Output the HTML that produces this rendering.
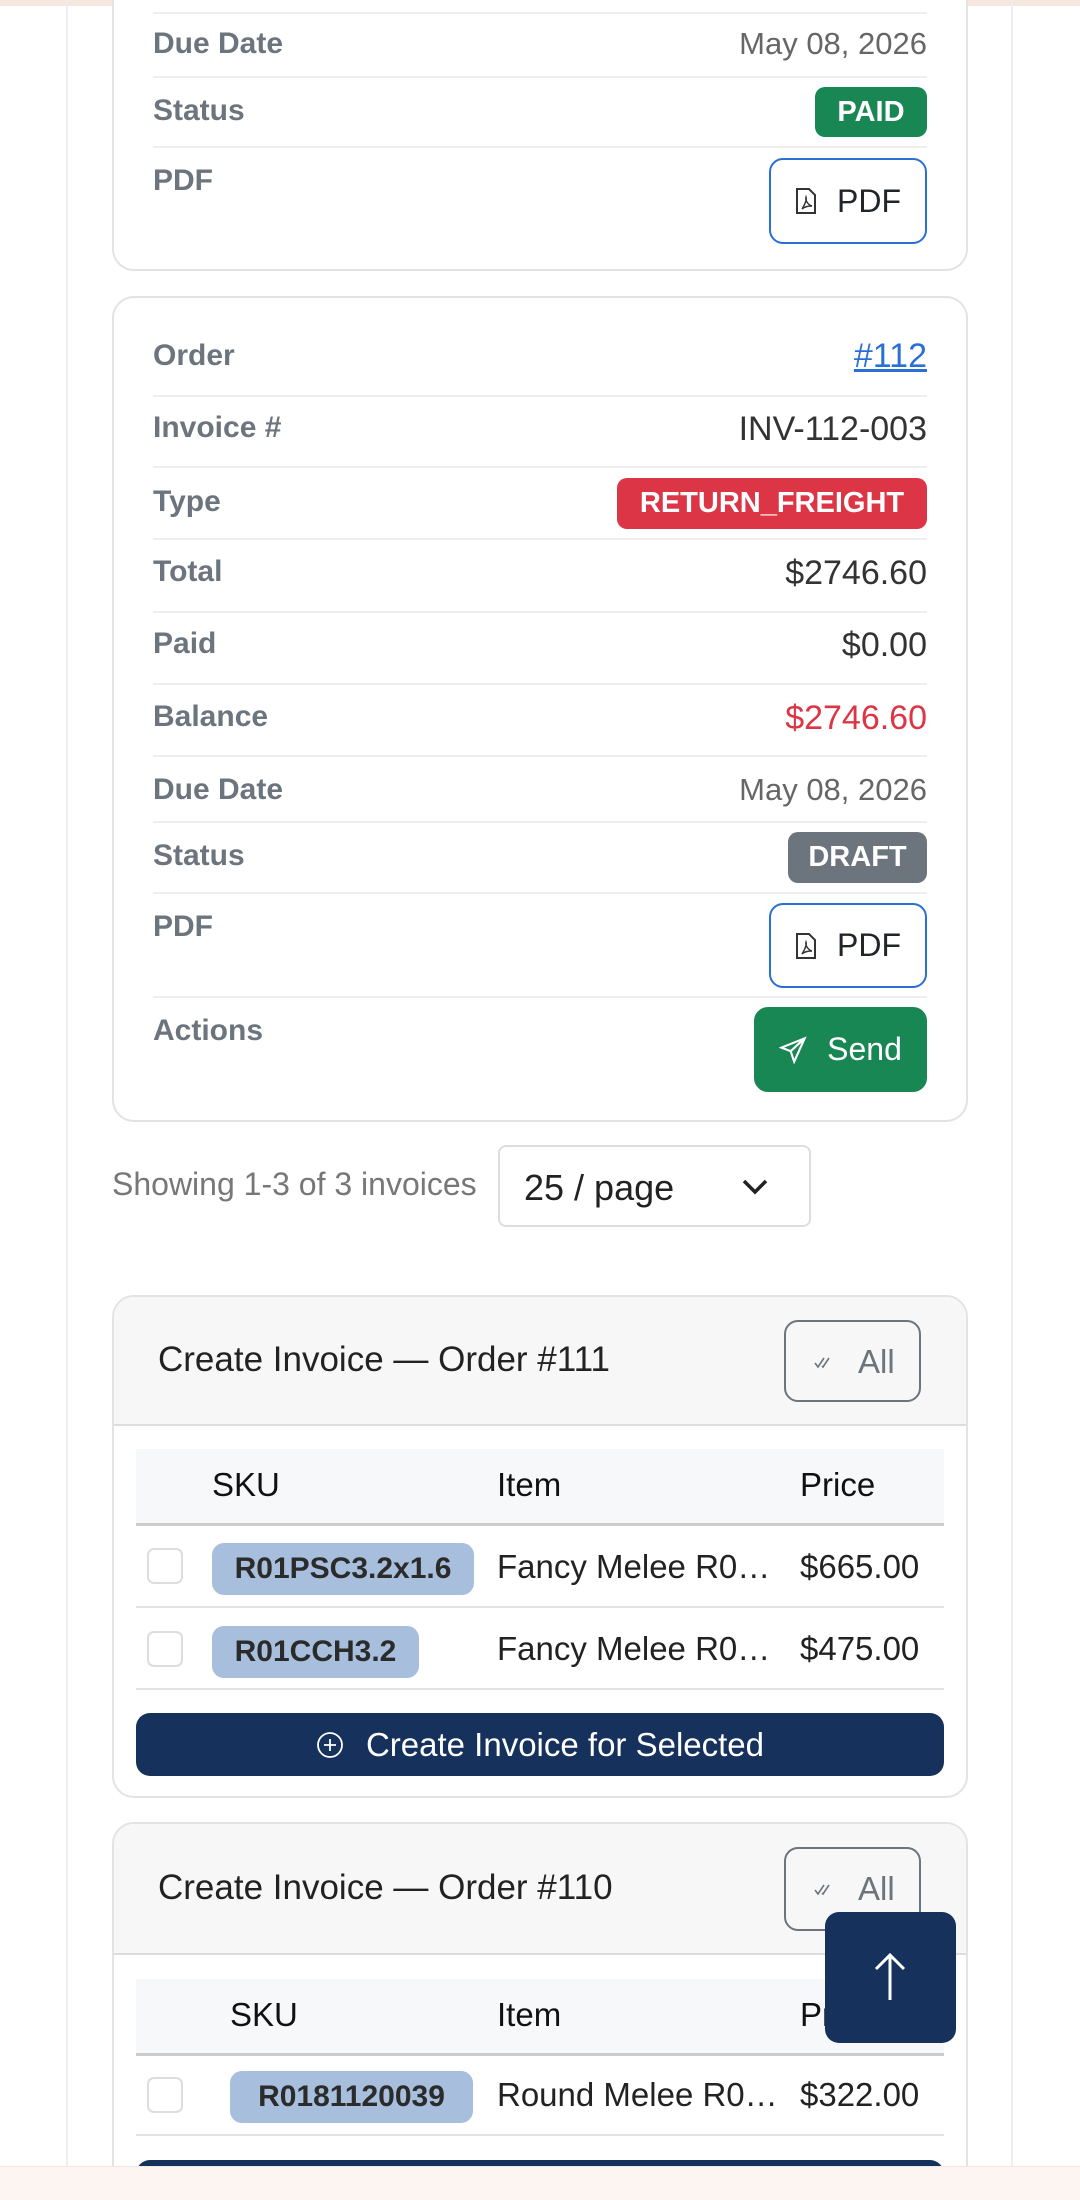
<!DOCTYPE html>
<html style="width:1080px;height:2200px;overflow:hidden"><head><meta charset="utf-8"><style>
*{box-sizing:border-box;margin:0;padding:0}
body{width:1080px;height:2200px;background:#fff;position:relative;overflow:hidden;font-family:"Liberation Sans",sans-serif;color:#212529}
.a{position:absolute}
.vl{position:absolute;top:0;bottom:0;width:2px;background:#eee}
.card{position:absolute;left:112px;width:856px;border:2px solid #e3e3e3;border-radius:22px;background:#fff;overflow:hidden}
.lab{position:absolute;left:153px;font-weight:bold;color:#6c757d;font-size:30px}
.val{position:absolute;right:153px;font-size:34px;color:#333;text-align:right}
.hl{position:absolute;left:153px;width:774px;height:2px;background:#eeeeee}
.badge{position:absolute;right:153px;color:#fff;font-weight:bold;font-size:29px;border-radius:10px;text-align:center}
.btn{position:absolute;right:153px;border:2px solid #2a6fd6;border-radius:14px;font-size:32px;color:#212529;display:flex;align-items:center;justify-content:center;gap:20px}
.th{position:absolute;font-size:33px;color:#111}
.sku{position:absolute;background:#a7bedc;border-radius:12px;font-weight:bold;font-size:30px;color:#2b2b2b;display:flex;align-items:center;justify-content:center}
.cb{position:absolute;left:147px;width:36px;height:36px;border:2px solid #ddd;border-radius:7px}
.td{position:absolute;font-size:33px;color:#222;white-space:nowrap}
</style></head><body>
<div class="a" style="left:0;top:0;width:1080px;height:6px;background:#f6e8de"></div>
<div class="vl" style="left:66px"></div><div class="vl" style="left:1011px"></div>

<div class="card" style="top:-30px;height:301px;border-top:none"></div>
<div class="hl" style="top:12px"></div>
<div class="lab" style="top:27px">Due Date</div><div class="val" style="top:26px;font-size:31px;color:#666">May 08, 2026</div>
<div class="hl" style="top:76px"></div>
<div class="lab" style="top:94px">Status</div>
<div class="badge" style="top:87px;width:112px;height:50px;line-height:50px;background:#198754">PAID</div>
<div class="hl" style="top:146px"></div>
<div class="lab" style="top:164px">PDF</div>
<div class="btn" style="top:158px;width:158px;height:86px"><svg width="22" height="28" viewBox="0 0 22 28" fill="none" stroke="#333" stroke-width="2"><path d="M2 2h12l6 6v18H2z"/><path d="M7 22c3-5 5-9 4-12c-1 3 2 8 6 9c-4 0-8 1-10 3z" stroke-width="1.4"/></svg>PDF</div>

<div class="card" style="top:296px;height:826px"></div>
<div class="lab" style="top:339px">Order</div><div class="val" style="top:337px;color:#2a6fd6;text-decoration:underline">#112</div>
<div class="hl" style="top:395px"></div>
<div class="lab" style="top:411px">Invoice #</div><div class="val" style="top:410px">INV-112-003</div>
<div class="hl" style="top:466px"></div>
<div class="lab" style="top:485px">Type</div>
<div class="badge" style="top:478px;width:310px;height:51px;line-height:51px;background:#dc3545">RETURN_FREIGHT</div>
<div class="hl" style="top:538px"></div>
<div class="lab" style="top:555px">Total</div><div class="val" style="top:554px">$2746.60</div>
<div class="hl" style="top:611px"></div>
<div class="lab" style="top:627px">Paid</div><div class="val" style="top:626px">$0.00</div>
<div class="hl" style="top:683px"></div>
<div class="lab" style="top:700px">Balance</div><div class="val" style="top:699px;color:#dc3545">$2746.60</div>
<div class="hl" style="top:755px"></div>
<div class="lab" style="top:773px">Due Date</div><div class="val" style="top:772px;font-size:31px;color:#666">May 08, 2026</div>
<div class="hl" style="top:821px"></div>
<div class="lab" style="top:839px">Status</div>
<div class="badge" style="top:832px;width:139px;height:51px;line-height:51px;background:#6c757d">DRAFT</div>
<div class="hl" style="top:892px"></div>
<div class="lab" style="top:910px">PDF</div>
<div class="btn" style="top:903px;width:158px;height:85px"><svg width="22" height="28" viewBox="0 0 22 28" fill="none" stroke="#333" stroke-width="2"><path d="M2 2h12l6 6v18H2z"/><path d="M7 22c3-5 5-9 4-12c-1 3 2 8 6 9c-4 0-8 1-10 3z" stroke-width="1.4"/></svg>PDF</div>
<div class="hl" style="top:996px"></div>
<div class="lab" style="top:1014px">Actions</div>
<div class="btn" style="top:1007px;width:173px;height:85px;background:#198754;border-color:#198754;color:#fff"><svg width="28" height="28" viewBox="0 0 24 24" fill="none" stroke="#fff" stroke-width="1.8"><path d="M22 2L2 10l8 3 3 9z"/><path d="M22 2L10 13"/></svg>Send</div>

<div class="a" style="left:112px;top:1166px;font-size:32px;color:#777">Showing 1-3 of 3 invoices</div>
<div class="a" style="left:498px;top:1145px;width:313px;height:82px;border:2px solid #ddd;border-radius:8px;font-size:36px;padding:20px 0 0 24px;color:#222">25 / page
<svg class="a" style="left:240px;top:30px" width="30" height="20" viewBox="0 0 30 20" fill="none" stroke="#222" stroke-width="3.5"><path d="M4 4l11 11 11-11"/></svg></div>

<!-- card 3 -->
<div class="card" style="top:1295px;height:503px"></div>
<div class="a" style="left:114px;top:1297px;width:852px;height:129px;background:#f7f7f7;border-bottom:2px solid #ddd;border-radius:20px 20px 0 0"></div>
<div class="a" style="left:158px;top:1340px;font-size:35px;color:#222">Create Invoice — Order #111</div>
<div class="a" style="left:784px;top:1320px;width:137px;height:82px;border:2px solid #6c757d;border-radius:14px;font-size:33px;color:#6c757d;padding:21px 0 0 72px">All<svg class="a" style="left:28px;top:34px" width="20" height="14" viewBox="0 0 20 14" fill="none" stroke="#6c757d" stroke-width="1.6"><path d="M1 7l3 4 6-9M8 10l1 1 6-9"/></svg></div>
<div class="a" style="left:136px;top:1449px;width:808px;height:77px;background:#f7f8fa;border-bottom:3px solid #ccc"></div>
<div class="th" style="left:212px;top:1466px">SKU</div><div class="th" style="left:497px;top:1466px">Item</div><div class="th" style="left:800px;top:1466px">Price</div>
<div class="cb" style="top:1548px"></div>
<div class="sku" style="left:212px;top:1543px;width:262px;height:52px">R01PSC3.2x1.6</div>
<div class="td" style="left:497px;top:1548px">Fancy Melee R0…</div><div class="td" style="left:800px;top:1548px">$665.00</div>
<div class="a" style="left:136px;top:1606px;width:808px;height:2px;background:#e3e3e3"></div>
<div class="cb" style="top:1631px"></div>
<div class="sku" style="left:212px;top:1626px;width:207px;height:52px">R01CCH3.2</div>
<div class="td" style="left:497px;top:1630px">Fancy Melee R0…</div><div class="td" style="left:800px;top:1630px">$475.00</div>
<div class="a" style="left:136px;top:1688px;width:808px;height:2px;background:#e3e3e3"></div>
<div class="a" style="left:136px;top:1713px;width:808px;height:63px;background:#16325c;border-radius:14px;color:#fff;font-size:33px;display:flex;align-items:center;justify-content:center;gap:22px"><svg width="28" height="28" viewBox="0 0 28 28" fill="none" stroke="#fff" stroke-width="1.8"><circle cx="14" cy="14" r="12"/><path d="M14 8v12M8 14h12"/></svg>Create Invoice for Selected</div>

<!-- card 4 -->
<div class="card" style="top:1822px;height:400px"></div>
<div class="a" style="left:114px;top:1824px;width:852px;height:131px;background:#f7f7f7;border-bottom:2px solid #ddd;border-radius:20px 20px 0 0"></div>
<div class="a" style="left:158px;top:1868px;font-size:35px;color:#222">Create Invoice — Order #110</div>
<div class="a" style="left:784px;top:1847px;width:137px;height:84px;border:2px solid #6c757d;border-radius:14px;font-size:33px;color:#6c757d;padding:21px 0 0 72px">All<svg class="a" style="left:28px;top:34px" width="20" height="14" viewBox="0 0 20 14" fill="none" stroke="#6c757d" stroke-width="1.6"><path d="M1 7l3 4 6-9M8 10l1 1 6-9"/></svg></div>
<div class="a" style="left:136px;top:1979px;width:808px;height:77px;background:#f7f8fa;border-bottom:3px solid #ccc"></div>
<div class="th" style="left:230px;top:1996px">SKU</div><div class="th" style="left:497px;top:1996px">Item</div><div class="th" style="left:800px;top:1996px">Price</div>
<div class="cb" style="top:2077px"></div>
<div class="sku" style="left:230px;top:2071px;width:243px;height:52px">R0181120039</div>
<div class="td" style="left:497px;top:2076px">Round Melee R0…</div><div class="td" style="left:800px;top:2076px">$322.00</div>
<div class="a" style="left:136px;top:2134px;width:808px;height:2px;background:#e3e3e3"></div>
<div class="a" style="left:136px;top:2160px;width:808px;height:40px;background:#16325c;border-radius:14px 14px 0 0"></div>

<div class="a" style="left:825px;top:1912px;width:131px;height:131px;background:#16325c;border-radius:14px"><svg class="a" style="left:45px;top:40px" width="40" height="50" viewBox="0 0 40 50" fill="none" stroke="#fff" stroke-width="3"><path d="M20 48V3M6 17L20 3l14 14"/></svg></div>
<div class="a" style="left:0;bottom:0;width:1080px;height:34px;background:#fdf5f2;border-top:1px solid #f3e6e0"></div>
</body></html>
